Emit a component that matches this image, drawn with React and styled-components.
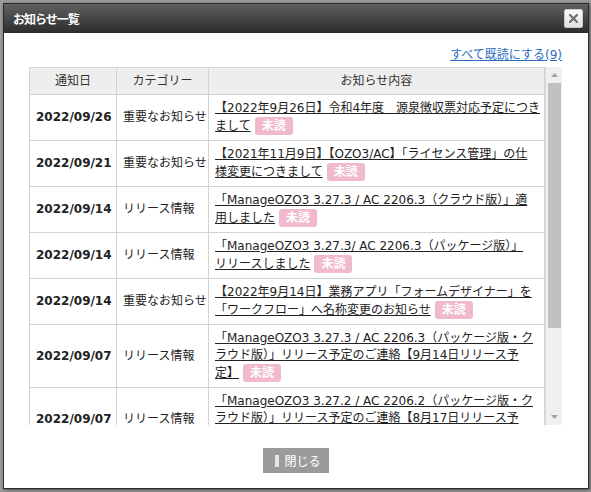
import styled, { createGlobalStyle } from 'styled-components'

const GlobalStyle = createGlobalStyle`
  html, body {
    margin: 0;
    padding: 0;
  }
  body {
    background: #9a9a9a;
    font-family: "DejaVu Sans", "Noto Sans CJK JP", sans-serif;
    font-size: 12px;
    color: #222;
  }
`

const Dialog = styled.div`
  margin: 3px;
  width: 584px;
  height: 484px;
  border: 1px solid #2a2a2a;
  background: #fff;
  display: flex;
  flex-direction: column;
  box-shadow: 1px 1px 3px rgba(0, 0, 0, 0.5);
`

const TitleBar = styled.div`
  height: 29px;
  display: flex;
  align-items: center;
  justify-content: space-between;
  padding: 0 5px 0 9px;
  background: linear-gradient(#606060, #2c2c2c);
`

const Title = styled.h1`
  margin: 0;
  color: #fff;
  font-size: 12px;
  font-weight: bold;
  letter-spacing: -1px;
`

const CloseButton = styled.button`
  width: 19px;
  height: 19px;
  padding: 0;
  border: 1px solid #c8c8c8;
  border-radius: 2px;
  background: linear-gradient(#fafafa, #e2e2e2);
  display: flex;
  align-items: center;
  justify-content: center;
`

const Body = styled.div`
  flex: 1;
  display: flex;
  flex-direction: column;
  padding: 14px 26px 0 25px;
`

const LinkRow = styled.div`
  text-align: right;
  line-height: 17px;
  margin-bottom: 3px;
`

const ReadAll = styled.a`
  color: #2a6cc0;
  text-decoration: underline;
  cursor: pointer;
`

const ScrollFrame = styled.div`
  height: 358px;
  display: flex;
`

const TableArea = styled.div`
  flex: 1;
  overflow: hidden;
`

const Table = styled.table`
  width: 100%;
  border-collapse: collapse;
  table-layout: fixed;
  border: 1px solid #cfcfcf;
`

const Th = styled.th`
  background: #eeeeee;
  border: 1px solid #d3d3d3;
  padding: 5px 6px;
  line-height: 16px;
  font-weight: normal;
  color: #333;
  text-align: center;
`

const Td = styled.td`
  border: 1px solid #d3d3d3;
  padding: 5px 5px 5px 6px;
  line-height: 17px;
  vertical-align: middle;
  white-space: nowrap;
  font-weight: ${({ $bold }) => ($bold ? 'bold' : 'normal')};
  color: #222;
`

const Subject = styled.a`
  color: #222;
  text-decoration: underline;
  cursor: pointer;
`

const Badge = styled.span`
  display: inline-block;
  margin-left: 4px;
  padding: 0 7px;
  line-height: 18px;
  border-radius: 3px;
  background: #f1b9cd;
  color: #fff;
  font-weight: bold;
  vertical-align: middle;
`

const Scrollbar = styled.div`
  width: 16px;
  border-left: 1px solid #dcdcdc;
  background: #f0f0f0;
  display: flex;
  flex-direction: column;
`

const Arrow = styled.div`
  height: 16px;
  display: flex;
  align-items: center;
  justify-content: center;
`

const Thumb = styled.div`
  height: 245px;
  margin: 0 1px 0 2px;
  background: #c1c1c1;
`

const Spacer = styled.div`
  flex: 1;
`

const Footer = styled.div`
  display: flex;
  justify-content: center;
  padding: 23px 0 15px;
`

const CloseAction = styled.button`
  width: 66px;
  height: 25px;
  border: none;
  background: #9b9b9b;
  color: #fff;
  font-family: inherit;
  font-size: 12px;
  display: flex;
  align-items: center;
  gap: 6px;
  padding: 0 0 0 12px;

  &::before {
    content: '';
    width: 4px;
    height: 12px;
    background: #e6e6e6;
  }
`

const notices = [
  { date: '2022/09/26', category: '重要なお知らせ', lines: ['【2022年9月26日】令和4年度　源泉徴収票対応予定につき', 'まして'] },
  { date: '2022/09/21', category: '重要なお知らせ', lines: ['【2021年11月9日】【OZO3/AC】「ライセンス管理」の仕', '様変更につきまして'] },
  { date: '2022/09/14', category: 'リリース情報', lines: ['「ManageOZO3 3.27.3 / AC 2206.3（クラウド版）」適', '用しました'] },
  { date: '2022/09/14', category: 'リリース情報', lines: ['「ManageOZO3 3.27.3/ AC 2206.3（パッケージ版）」', 'リリースしました'] },
  { date: '2022/09/14', category: '重要なお知らせ', lines: ['【2022年9月14日】業務アプリ「フォームデザイナー」を', '「ワークフロー」へ名称変更のお知らせ'] },
  { date: '2022/09/07', category: 'リリース情報', lines: ['「ManageOZO3 3.27.3 / AC 2206.3（パッケージ版・ク', 'ラウド版）」リリース予定のご連絡【9月14日リリース予', '定】'] },
  { date: '2022/09/07', category: 'リリース情報', lines: ['「ManageOZO3 3.27.2 / AC 2206.2（パッケージ版・ク', 'ラウド版）」リリース予定のご連絡【8月17日リリース予', '定】'] },
  { date: '2022/08/31', category: 'リリース情報', lines: ['「ManageOZO3 3.27.2 / AC 2206.2（クラウド版）」適', '用しました'] },
  { date: '2022/08/17', category: '重要なお知らせ', lines: ['【2022年8月17日】夏季休業期間中のサポート対応に', 'つきまして'] },
]

const CloseIcon = () => (
  <svg width="9" height="9" viewBox="0 0 9 9">
    <path d="M1 1 L8 8 M8 1 L1 8" stroke="#6e6e6e" strokeWidth="2.2" strokeLinecap="square" />
  </svg>
)

const Triangle = ({ down }) => (
  <svg width="7" height="4" viewBox="0 0 7 4">
    <path d={down ? 'M0 0 H7 L3.5 4 Z' : 'M0 4 H7 L3.5 0 Z'} fill="#a3a3a3" />
  </svg>
)

const App = () => (
  <>
    <GlobalStyle />
    <Dialog>
      <TitleBar>
        <Title>お知らせ一覧</Title>
        <CloseButton aria-label="close">
          <CloseIcon />
        </CloseButton>
      </TitleBar>
      <Body>
        <LinkRow>
          <ReadAll>すべて既読にする(9)</ReadAll>
        </LinkRow>
        <ScrollFrame>
          <TableArea>
            <Table>
              <colgroup>
                <col style={{ width: 87 }} />
                <col style={{ width: 92 }} />
                <col />
              </colgroup>
              <thead>
                <tr>
                  <Th>通知日</Th>
                  <Th>カテゴリー</Th>
                  <Th>お知らせ内容</Th>
                </tr>
              </thead>
              <tbody>
                {notices.map((n, i) => (
                  <tr key={i}>
                    <Td $bold>{n.date}</Td>
                    <Td>{n.category}</Td>
                    <Td>
                      {n.lines.map((line, j) => (
                        <span key={j}>
                          {j > 0 && <br />}
                          <Subject>{line}</Subject>
                        </span>
                      ))}
                      <Badge>未読</Badge>
                    </Td>
                  </tr>
                ))}
              </tbody>
            </Table>
          </TableArea>
          <Scrollbar>
            <Arrow>
              <Triangle />
            </Arrow>
            <Thumb />
            <Spacer />
            <Arrow>
              <Triangle down />
            </Arrow>
          </Scrollbar>
        </ScrollFrame>
        <Footer>
          <CloseAction>閉じる</CloseAction>
        </Footer>
      </Body>
    </Dialog>
  </>
)

export default App
